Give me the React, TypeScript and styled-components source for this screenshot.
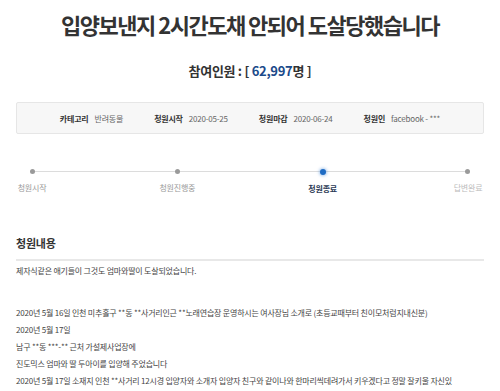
import React from "react";
import styled, { createGlobalStyle } from "styled-components";

const Global = createGlobalStyle`
  html, body { margin: 0; padding: 0; background: #fff; }
  body { font-family: "Noto Sans CJK KR", "Noto Sans", sans-serif; color: #333; }
`;

const Page = styled.div`
  width: 500px;
  padding: 0 16px;
  box-sizing: border-box;
`;

const Title = styled.h1`
  margin: 0;
  padding-top: 9px;
  text-align: center;
  font-size: 22px;
  line-height: 30px;
  font-weight: 700;
  letter-spacing: -1.5px;
  color: #333;
`;

const Count = styled.div`
  margin-top: 23px;
  text-align: center;
  font-size: 13px;
  line-height: 18px;
  font-weight: 700;
  color: #333;
  letter-spacing: -0.3px;
`;

const Num = styled.span`
  color: #1b4a8a;
`;

const InfoBox = styled.div`
  margin-top: 22px;
  height: 32px;
  box-sizing: border-box;
  background: #f7f7f7;
  border: 1px solid #e6e6e6;
  border-radius: 2px;
  display: flex;
  align-items: center;
  justify-content: center;
  gap: 31px;
`;

const InfoItem = styled.div`
  display: flex;
  align-items: center;
  gap: 6px;
  font-size: 8px;
  letter-spacing: -0.2px;
`;

const InfoLabel = styled.span`
  font-weight: 700;
  color: #333;
`;

const InfoValue = styled.span`
  color: #666;
`;

const Steps = styled.div`
  position: relative;
  margin: 33px -4px 0;
  display: flex;
  justify-content: space-between;
  &::before {
    content: "";
    position: absolute;
    left: 20px;
    right: 20px;
    top: 4px;
    height: 1px;
    background: #dcdcdc;
  }
`;

const Step = styled.div`
  position: relative;
  width: 40px;
  display: flex;
  flex-direction: column;
  align-items: center;
  gap: 8px;
`;

const Dot = styled.span<{ $active?: boolean }>`
  width: ${(p) => (p.$active ? 6 : 5)}px;
  height: ${(p) => (p.$active ? 6 : 5)}px;
  margin-top: ${(p) => (p.$active ? 1.5 : 2)}px;
  border-radius: 50%;
  background: ${(p) => (p.$active ? "#1f6cc4" : "#9a9a9a")};
  box-shadow: ${(p) => (p.$active ? "0 0 3px 1px rgba(70,140,220,0.45)" : "none")};
`;

const StepLabel = styled.span<{ $tone: "done" | "active" | "todo" }>`
  white-space: nowrap;
  font-size: 8px;
  letter-spacing: -0.2px;
  font-weight: ${(p) => (p.$tone === "active" ? 700 : 400)};
  color: ${(p) => (p.$tone === "active" ? "#2b3a55" : p.$tone === "done" ? "#999" : "#bbb")};
`;

const Section = styled.section`
  margin-top: 41px;
`;

const Heading = styled.h2`
  margin: 0;
  padding-bottom: 8px;
  font-size: 11px;
  line-height: 16px;
  font-weight: 700;
  letter-spacing: -0.2px;
  color: #333;
  border-bottom: 2px solid #e8e8e8;
`;

const Body = styled.div`
  padding-top: 1px;
  font-size: 8px;
  line-height: 17px;
  letter-spacing: -0.2px;
  color: #444;
`;

const Para = styled.p<{ $gap?: number }>`
  margin: 0;
  margin-bottom: ${(p) => p.$gap ?? 0}px;
  white-space: nowrap;
`;

const info = [
  ["카테고리", "반려동물"],
  ["청원시작", "2020-05-25"],
  ["청원마감", "2020-06-24"],
  ["청원인", "facebook - ***"],
];

const steps: { label: string; tone: "done" | "active" | "todo" }[] = [
  { label: "청원시작", tone: "done" },
  { label: "청원진행중", tone: "done" },
  { label: "청원종료", tone: "active" },
  { label: "답변완료", tone: "todo" },
];

export default function App() {
  return (
    <Page>
      <Global />
      <Title>입양보낸지 2시간도채 안되어 도살당했습니다</Title>
      <Count>
        참여인원 : [ <Num>62,997</Num>명 ]
      </Count>
      <InfoBox>
        {info.map(([l, v]) => (
          <InfoItem key={l}>
            <InfoLabel>{l}</InfoLabel>
            <InfoValue>{v}</InfoValue>
          </InfoItem>
        ))}
      </InfoBox>
      <Steps>
        {steps.map((s) => (
          <Step key={s.label}>
            <Dot $active={s.tone === "active"} />
            <StepLabel $tone={s.tone}>{s.label}</StepLabel>
          </Step>
        ))}
      </Steps>
      <Section>
        <Heading>청원내용</Heading>
        <Body>
          <Para $gap={25}>제자식같은 애기들이 그것도 엄마와딸이 도살되었습니다.</Para>
          <Para>
            2020년 5월 16일 인천 미추홀구 **동 **사거리인근 **노래연습장 운영하시는 여사장님 소개로 (초등교때부터 친이모처럼지내신분)
          </Para>
          <Para>2020년 5월 17일</Para>
          <Para>남구 **동 ***-** 근처 가설제사업장에</Para>
          <Para>진도믹스 엄마와 딸 두아이를 입양해 주었습니다</Para>
          <Para>
            2020년 5월 17일 소재지 인천 **사거리 12시경 입양자와 소개자 입양자 친구와 같이나와 한마리씩데려가서 키우겠다고 정말 잘키울 자신있
          </Para>
        </Body>
      </Section>
    </Page>
  );
}
